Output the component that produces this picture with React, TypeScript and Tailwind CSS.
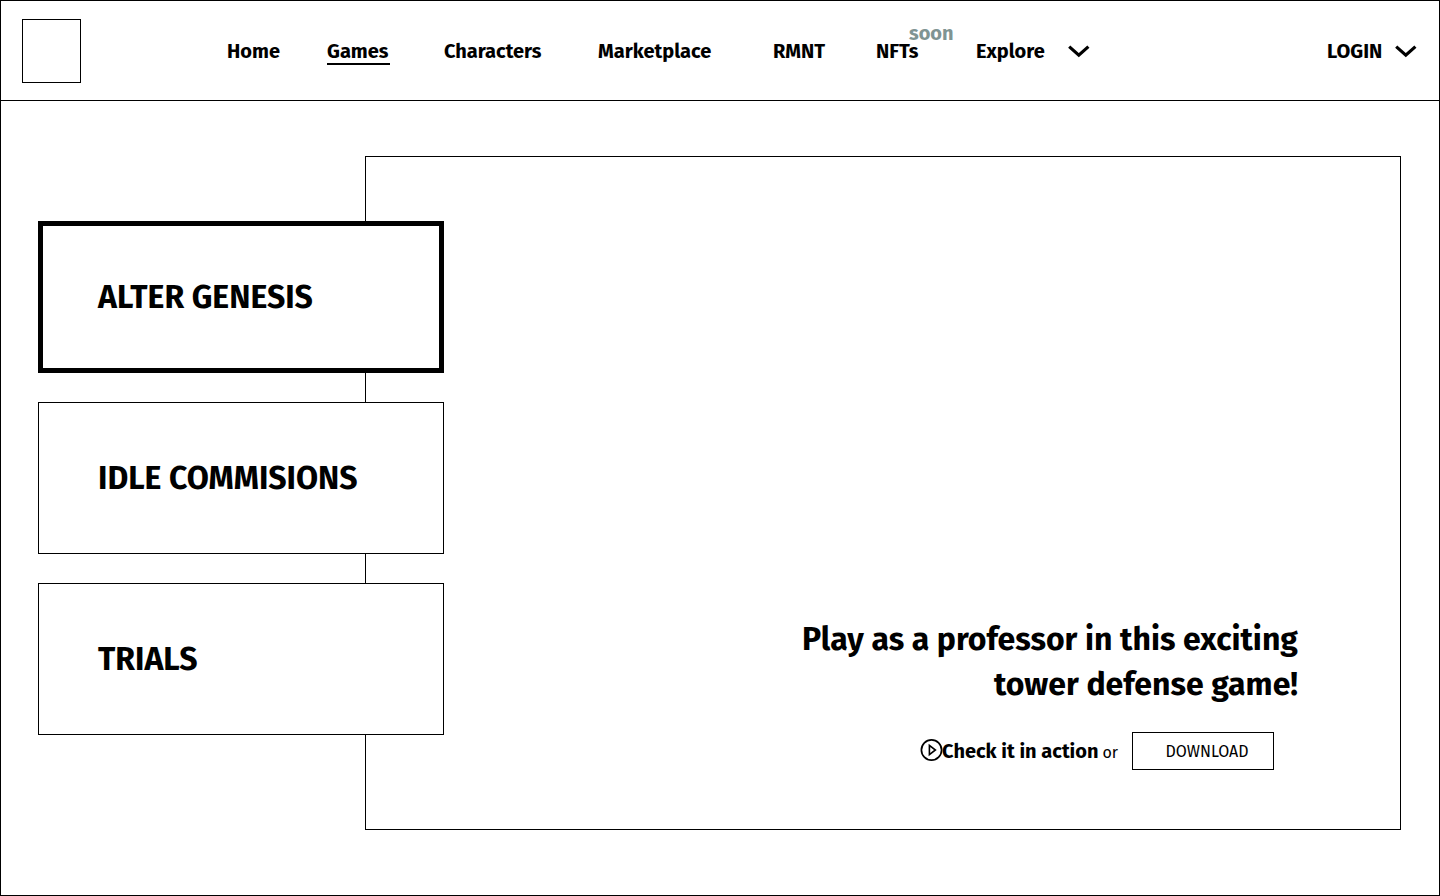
import React from "react";

const links = [
  { label: "Home", slot: "w-[100px]" },
  { label: "Games", slot: "w-[117px]", active: true },
  { label: "Characters", slot: "w-[154px]" },
  { label: "Marketplace", slot: "w-[175px]" },
  { label: "RMNT", slot: "w-[103px]" },
  { label: "NFTs", slot: "w-[100px]", badge: "soon" },
];

const games = [
  { title: "ALTER GENESIS", selected: true },
  { title: "IDLE COMMISIONS", selected: false },
  { title: "TRIALS", selected: false },
];

function Chevron() {
  return (
    <svg width="22" height="14" viewBox="0 0 22 14" fill="none" aria-hidden="true">
      <path d="M1.2 2.6 L10.8 11.2 L20.4 2.6" stroke="black" strokeWidth="3.2" />
    </svg>
  );
}

function PlayIcon() {
  return (
    <svg className="overflow-visible" width="22" height="24" viewBox="0 0 22 24" fill="none" stroke="black" aria-hidden="true">
      <circle cx="11.5" cy="11" r="10.1" strokeWidth="1.7" />
      <path d="M9.4 6.4 L15.4 11 L9.4 15.6 Z" strokeWidth="1.6" />
    </svg>
  );
}

export default function App() {
  return (
    <div className="flex min-h-screen flex-col border border-black bg-white font-['Fira_Sans','Roboto',sans-serif] text-black">
      <header className="flex h-[100px] shrink-0 items-center border-b border-black pr-[22px] pl-[21px] text-xl leading-6 font-bold">
        <a href="#" aria-label="Homepage" className="h-16 w-[59px] shrink-0 border border-black" />
        <nav className="ml-[146px] flex items-center">
          {links.map((link) => (
            <div key={link.label} className={link.slot}>
              <a href="#" className="relative inline-block">
                {link.label}
                {link.active && <span className="absolute top-6 left-0 h-0.5 w-[63px] bg-black" />}
                {link.badge && <span className="absolute bottom-[18px] left-[33px] text-[#7f9493]">{link.badge}</span>}
              </a>
            </div>
          ))}
          <button type="button" className="flex w-[114px] items-center justify-between">
            Explore
            <Chevron />
          </button>
        </nav>
        <button type="button" className="ml-auto flex w-[90px] items-center justify-between">
          LOGIN
          <Chevron />
        </button>
      </header>

      <main className="grid grow grid-cols-[327px_79px_1fr] pt-[55px] pr-[38px] pb-[65px] pl-[37px]">
        <section className="col-span-2 col-start-2 row-start-1 flex flex-col items-end justify-end border border-black pr-[102px] pb-[59px]">
          <h1 className="max-w-[520px] text-right text-[32px] leading-[45px] font-bold">
            Play as a professor in this exciting tower defense game!
          </h1>
          <div className="mt-[25px] mr-6 flex items-center">
            <button type="button" className="flex items-center text-xl leading-6 font-bold">
              <PlayIcon />
              Check it in action
            </button>
            <span className="ml-1 pt-1 text-base leading-6">or</span>
            <button type="button" className="ml-3.5 h-[38px] w-[142px] border border-black pt-0.5 pl-2 text-base leading-6">
              DOWNLOAD
            </button>
          </div>
        </section>

        <div className="z-10 col-span-2 col-start-1 row-start-1 flex flex-col gap-[29px] pt-[65px]">
          {games.map((game) => (
            <button
              key={game.title}
              type="button"
              className={
                game.selected
                  ? "h-[152px] border-[5px] border-black bg-white pl-[55px] text-left text-[32px] leading-10 font-bold"
                  : "h-[152px] border border-black bg-white pl-[59px] text-left text-[32px] leading-10 font-bold"
              }
            >
              {game.title}
            </button>
          ))}
        </div>
      </main>
    </div>
  );
}
